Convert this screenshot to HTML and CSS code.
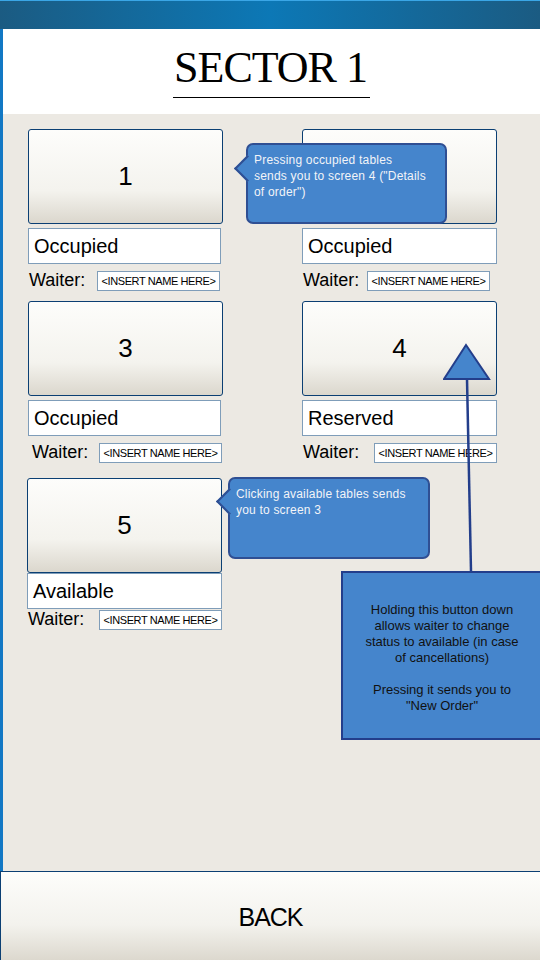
FILE: index.html
```html
<!DOCTYPE html>
<html lang="en">

<head>
    <meta charset="UTF-8">
    <meta name="viewport" content="width=device-width, initial-scale=1.0">
    <title>Sector 1</title>
    <link rel="stylesheet" href="styles.css">
</head>

<body>
    <div class="titlebar"></div>
    <div class="frame">
        <div class="header">
            <h1>SECTOR 1</h1>
        </div>
        <div class="content">
            <div class="tables">
                <div class="table">
                    <button class="tableBtn">1</button>
                    <div class="status">Occupied</div>
                    <div class="waiter"><span>Waiter:</span><div class="name">&lt;INSERT NAME HERE&gt;</div></div>
                </div>
                <div class="table right">
                    <button class="tableBtn">2</button>
                    <div class="status">Occupied</div>
                    <div class="waiter"><span>Waiter:</span><div class="name">&lt;INSERT NAME HERE&gt;</div></div>
                </div>
                <div class="table row2">
                    <button class="tableBtn">3</button>
                    <div class="status">Occupied</div>
                    <div class="waiter indent"><span>Waiter:</span><div class="name">&lt;INSERT NAME HERE&gt;</div></div>
                </div>
                <div class="table right row2">
                    <button class="tableBtn">4</button>
                    <div class="status">Reserved</div>
                    <div class="waiter wide"><span>Waiter:</span><div class="name">&lt;INSERT NAME HERE&gt;</div></div>
                </div>
                <div class="table tight">
                    <button class="tableBtn">5</button>
                    <div class="status">Available</div>
                    <div class="waiter wide"><span>Waiter:</span><div class="name">&lt;INSERT NAME HERE&gt;</div></div>
                </div>
            </div>

            <!-- notes over the mockup -->
            <div class="callout note1">Pressing occupied tables<br>sends you to screen 4 ("Details<br>of order")</div>
            <div class="callout note2">Clicking available tables sends<br>you to screen 3</div>
            <svg class="arrow" width="60" height="232" viewBox="0 0 60 232">
                <line x1="24" y1="36" x2="28" y2="228" stroke="#233E8B" stroke-width="2.5" />
                <polygon points="23,2 46,36 1,36" fill="#4585CC" stroke="#233E8B" stroke-width="2" />
            </svg>
            <div class="note3">
                Holding this button down<br>allows waiter to change<br>status to available (in case<br>of cancellations)<br><br>
                Pressing it sends you to<br>"New Order"
            </div>
        </div>
    </div>
    <button class="back">BACK</button>
</body>

</html>
```

FILE: styles.css
```css
* {
    padding: 0;
    margin: 0;
    box-sizing: border-box;
}

body {
    width: 540px;
    height: 960px;
    overflow: hidden;
    font-family: Tahoma, "Liberation Sans", Arial, sans-serif;
    background-color: #ECE9E3;
}

.titlebar {
    height: 29px;
    border-top: 1px solid #3AA6E6;
    background: linear-gradient(90deg, #1B5B82 0%, #0C78B6 50%, #1B5B82 100%);
}

.frame {
    border-left: 3px solid #1278C4;
}

.header {
    height: 85px;
    background-color: #fff;
    text-align: center;
    padding-top: 14px;
}

.header h1 {
    display: inline-block;
    padding: 0 3px 4px 1px;
    border-bottom: 1px solid #000;
    font-family: "Liberation Serif", "Times New Roman", serif;
    font-size: 44px;
    font-weight: 400;
    letter-spacing: -1px;
    line-height: 50px;
}

.content {
    position: relative;
    height: 757px;
    background-color: #ECE9E3;
    padding: 15px 0 0 25px;
}

.tables {
    display: grid;
    grid-template-columns: 195px 195px;
    column-gap: 79px;
}

.table {
    display: flex;
    flex-direction: column;
    height: 172px;
}

.table.row2 {
    height: 177px;
}

.table.tight {
    margin-left: -1px;
}

.tableBtn {
    width: 195px;
    height: 95px;
    border: 1px solid #0B3F73;
    border-radius: 3px;
    background: linear-gradient(#FDFDFB 0%, #F4F3EE 65%, #DBD7CD 100%);
    font-family: Tahoma, "Liberation Sans", sans-serif;
    font-size: 26px;
    color: #000;
}

.status {
    width: 193px;
    height: 36px;
    margin-top: 4px;
    border: 1px solid #7F9DB9;
    background-color: #fff;
    font-size: 20px;
    line-height: 34px;
    padding-left: 5px;
    color: #000;
}

.right .status {
    width: 195px;
}

.tight .status {
    margin-top: 0;
    width: 195px;
}

.waiter {
    display: flex;
    align-items: center;
    justify-content: space-between;
    width: 192px;
    margin-top: 6px;
    padding-left: 1px;
    font-size: 18px;
    color: #000;
}

.right .waiter {
    width: 188px;
}

.waiter.indent {
    padding-left: 4px;
    width: 194px;
}

.right .waiter.wide {
    width: 195px;
}

.tight .waiter {
    margin-top: 0;
    width: 195px;
}

.name {
    width: 123px;
    height: 20px;
    border: 1px solid #7F9DB9;
    background-color: #fff;
    font-size: 11px;
    letter-spacing: -0.4px;
    line-height: 18px;
    text-align: center;
}

.callout {
    position: absolute;
    background-color: #4585CC;
    border: 2px solid #2F4F93;
    border-radius: 7px;
    color: #F2F4F8;
    font-size: 12px;
    letter-spacing: 0.2px;
    line-height: 16px;
    padding: 7px 6px;
    white-space: nowrap;
}

.callout::before {
    content: "";
    position: absolute;
    left: -10px;
    width: 17px;
    height: 17px;
    background-color: #4585CC;
    border-left: 2px solid #2F4F93;
    border-bottom: 2px solid #2F4F93;
    transform: rotate(45deg);
}

.note1 {
    left: 243px;
    top: 29px;
    width: 201px;
    height: 81px;
}

.note1::before {
    top: 14px;
}

.note2 {
    left: 225px;
    top: 363px;
    width: 202px;
    height: 82px;
}

.note2::before {
    top: 13px;
}

.arrow {
    position: absolute;
    left: 440px;
    top: 229px;
}

.note3 {
    position: absolute;
    left: 338px;
    top: 457px;
    width: 202px;
    height: 169px;
    background-color: #4585CC;
    border: 2px solid #233E8B;
    color: #111;
    font-size: 13px;
    line-height: 16px;
    text-align: center;
    white-space: nowrap;
    padding: 29px 0 0 0;
}

.back {
    display: block;
    width: 540px;
    height: 89px;
    border: none;
    border-top: 1px solid #0B3F73;
    border-left: 1px solid #0B3F73;
    background: linear-gradient(#FDFDFB 0%, #F3F2ED 60%, #DCD8CE 100%);
    font-family: Tahoma, "Liberation Sans", sans-serif;
    font-size: 25px;
    letter-spacing: -1px;
    color: #000;
    padding-top: 3px;
}
```
